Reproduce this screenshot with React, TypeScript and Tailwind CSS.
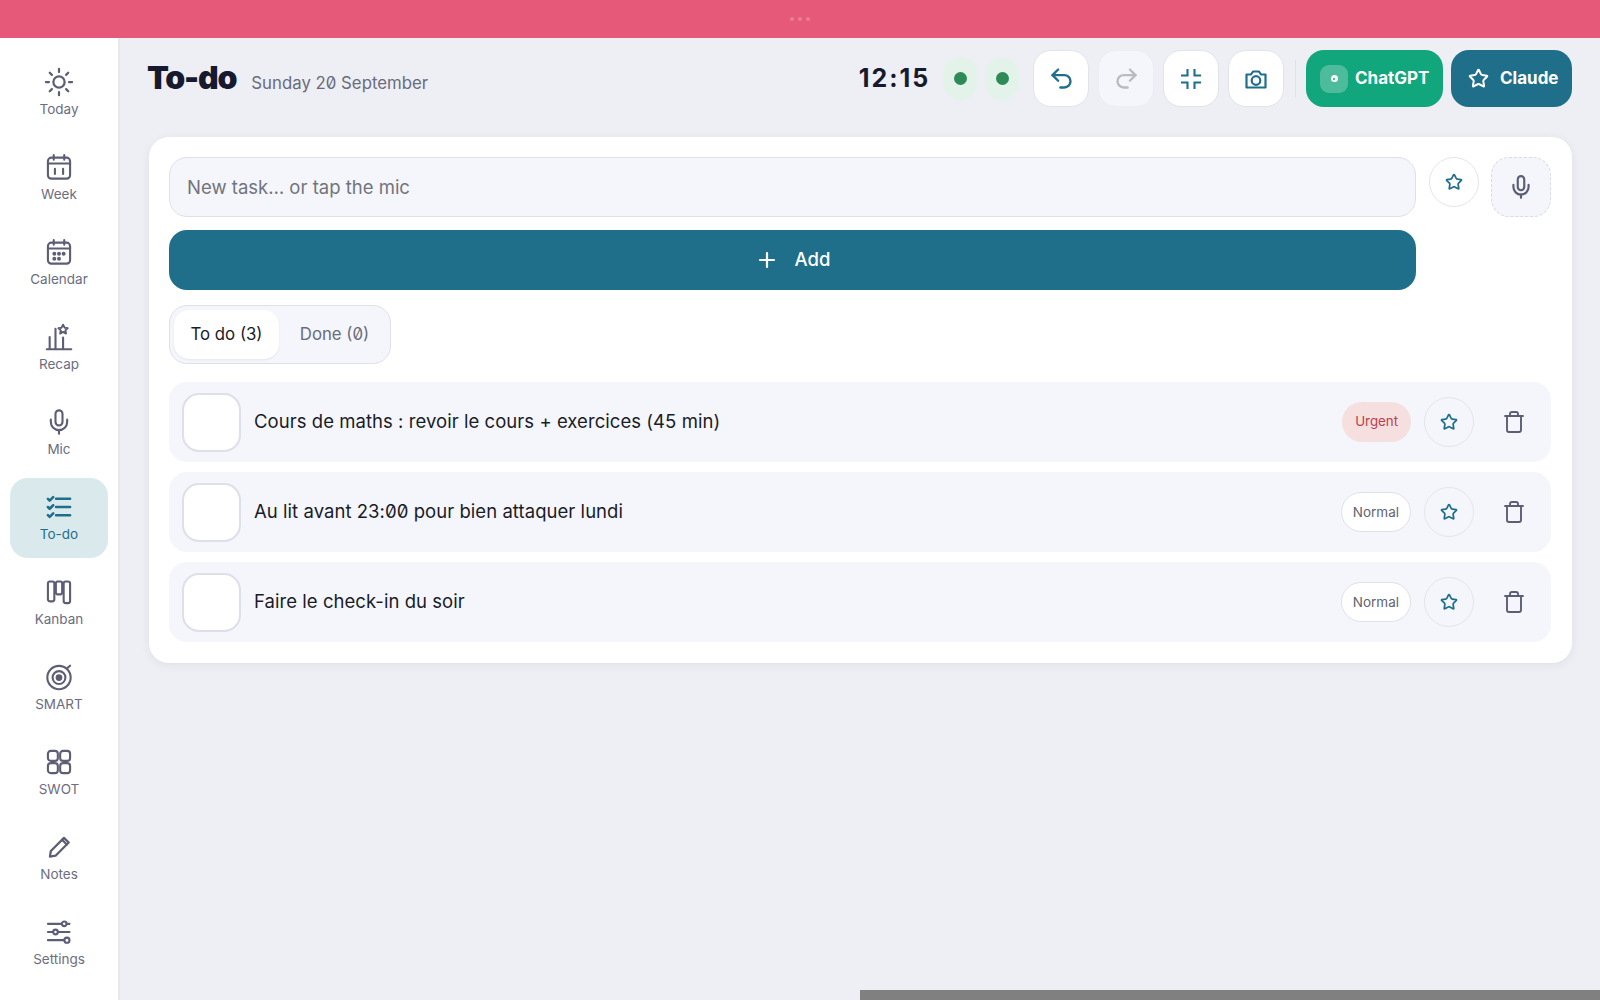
import React from "react";
import { Mic, Star, Trash, Undo2, Redo2, Plus } from "lucide-react";

const sw = 1.8;

function Svg({ children, size = 28, className = "" }: { children: React.ReactNode; size?: number; className?: string }) {
  return (
    <svg width={size} height={size} viewBox="0 0 24 24" fill="none" stroke="currentColor" strokeWidth={sw} strokeLinecap="round" strokeLinejoin="round" className={className}>
      {children}
    </svg>
  );
}

const SunIcon = () => (
  <Svg size={30}>
    <circle cx="12" cy="12" r="4.500" />
    <path d="M12 1.500v2.500M12 20v2.500M1.500 12H4M20 12h2.500M4.600 4.600l1.700 1.700M17.700 17.700l1.700 1.700M4.600 19.400l1.700-1.700M17.700 6.300l1.700-1.700" />
  </Svg>
);
const WeekIcon = () => (
  <Svg>
    <rect x="2.500" y="4" width="19" height="18" rx="3" />
    <path d="M7.500 1.800v4M16.500 1.800v4M2.500 9h19M8.500 13.500v4.500M15.500 13.500v4.500" />
  </Svg>
);
const CalendarIcon = () => (
  <Svg>
    <rect x="2.500" y="4" width="19" height="18" rx="3" />
    <path d="M7.500 1.800v4M16.500 1.800v4M2.500 9h19" />
    <g fill="currentColor" stroke="none">
      <circle cx="8" cy="13.500" r="1.700" />
      <circle cx="12" cy="13.500" r="1.700" />
      <circle cx="16" cy="13.500" r="1.700" />
      <circle cx="8" cy="17.800" r="1.700" />
      <circle cx="12" cy="17.800" r="1.700" />
    </g>
  </Svg>
);
const RecapIcon = () => (
  <Svg>
    <path d="M1.500 22.500h21M4 22.500V12M9 22.500V5M15.500 22.500V12.500" />
    <path d="m15.500 1.500 1.300 2.500 2.700.4-2 1.900.5 2.700-2.500-1.300-2.500 1.300.5-2.700-2-1.900 2.700-.4z" fill="none" strokeWidth={1.700} />
  </Svg>
);
const TodoIcon = () => (
  <Svg>
    <g strokeWidth={2.200}>
      <path d="M9.500 5h12M9.500 12h12M9.500 19h12" />
      <path d="m2.500 5 1.500 1.500L7 3.500M2.500 12 4 13.500 7 10.500M2.500 19 4 20.500 7 17.500" />
    </g>
  </Svg>
);
const KanbanIcon = () => (
  <Svg>
    <rect x="2.500" y="3" width="5.500" height="17" rx="1.800" />
    <rect x="9.300" y="3" width="5.400" height="11" rx="1.500" />
    <rect x="16" y="3" width="5.500" height="18.500" rx="1.800" />
  </Svg>
);
const SmartIcon = () => (
  <Svg>
    <circle cx="12" cy="12.500" r="10" />
    <circle cx="12" cy="12.500" r="5.500" />
    <circle cx="12" cy="12.500" r="2" fill="currentColor" />
    <path d="m19 4.500 2.500-2.200" />
  </Svg>
);
const SwotIcon = () => (
  <Svg>
    <rect x="2.500" y="2.500" width="8.500" height="8.500" rx="2.500" />
    <rect x="13" y="2.500" width="8.500" height="8.500" rx="2.500" />
    <rect x="2.500" y="13" width="8.500" height="8.500" rx="2.500" />
    <rect x="13" y="13" width="8.500" height="8.500" rx="2.500" />
  </Svg>
);
const NotesIcon = () => (
  <Svg size={27}>
    <g strokeWidth={2}>
      <path d="M3.500 21l.8-5L16 4.300 20.200 8.500 8.500 20.200z" />
      <path d="M14.300 6l4.200 4.200" />
    </g>
  </Svg>
);
const SettingsIcon = () => (
  <Svg>
    <path d="M2.500 5H14.500M18.500 5h2.500M2.500 12H7M11 12h10M2.500 19H16.500" />
    <circle cx="16.500" cy="5" r="2" />
    <circle cx="9" cy="12" r="2" />
    <circle cx="18.800" cy="19" r="2.200" />
  </Svg>
);
const CompressIcon = () => (
  <Svg size={24}>
    <path d="M8.500 2v6.500H2M15.500 2v6.500H22M8.500 22v-6.500H2M15.500 22v-6.500H22" strokeWidth={2.100} strokeLinecap="butt" strokeLinejoin="miter" />
  </Svg>
);
const CameraIcon = () => (
  <Svg size={24}>
    <g strokeWidth={2.200}>
      <path d="M2.500 7.500H7l2-3h6l2 3h4.500v13h-19z" />
      <circle cx="12" cy="13.500" r="4.300" />
    </g>
  </Svg>
);

const nav: { label: string; icon: React.ReactNode; active?: boolean }[] = [
  { label: "Today", icon: <SunIcon /> },
  { label: "Week", icon: <WeekIcon /> },
  { label: "Calendar", icon: <CalendarIcon /> },
  { label: "Recap", icon: <RecapIcon /> },
  { label: "Mic", icon: <Mic size={28} strokeWidth={sw} /> },
  { label: "To-do", icon: <TodoIcon />, active: true },
  { label: "Kanban", icon: <KanbanIcon /> },
  { label: "SMART", icon: <SmartIcon /> },
  { label: "SWOT", icon: <SwotIcon /> },
  { label: "Notes", icon: <NotesIcon /> },
  { label: "Settings", icon: <SettingsIcon /> },
];

const tasks = [
  { text: "Cours de maths : revoir le cours + exercices (45 min)", urgent: true },
  { text: "Au lit avant 23:00 pour bien attaquer lundi", urgent: false },
  { text: "Faire le check-in du soir", urgent: false },
];

function ToolBtn({ children, disabled }: { children: React.ReactNode; disabled?: boolean }) {
  return (
    <button className={`w-[56px] h-[57px] rounded-[18px] flex items-center justify-center border ${disabled ? "bg-[#f4f6fb] border-[#eceef4] text-[#b9bbc2]" : "bg-white border-[#e2e4ec] text-[#1f6f8b]"}`}>
      {children}
    </button>
  );
}

function StarBtn() {
  return (
    <button className="w-[50px] h-[50px] shrink-0 rounded-full border border-[#e3e5ea] flex items-center justify-center text-[#1f6f8b]">
      <Star size={18} strokeWidth={2.300} />
    </button>
  );
}

export default function App() {
  return (
    <div className="h-screen w-full flex flex-col overflow-hidden relative bg-[#eeeff4] font-[Inter,sans-serif] slashed-zero text-[#1a1c28]">
      <div className="h-[38px] shrink-0 bg-[#e65979] flex items-center justify-center gap-[4px]">
        <span className="w-[4px] h-[4px] rounded-full bg-[#ec7d97]" />
        <span className="w-[4px] h-[4px] rounded-full bg-[#ec7d97]" />
        <span className="w-[4px] h-[4px] rounded-full bg-[#ec7d97]" />
      </div>
      <div className="flex-1 flex min-h-0">
        <aside className="w-[120px] shrink-0 bg-white border-r-2 border-[#e6e8ee] pt-[15px] px-[10px] flex flex-col gap-[5px]">
          {nav.map((n) => (
            <div key={n.label} className={`h-[80px] shrink-0 rounded-[18px] flex flex-col items-center justify-center gap-[3px] ${n.active ? "bg-[#d9e9ec] text-[#1f6f8b]" : "text-[#5c5e76]"}`}>
              <div className="h-[28px] flex items-center justify-center">{n.icon}</div>
              <span className={`text-[13.500px] leading-[20px] ${n.active ? "text-[#1f6f8b]" : "text-[#6b6d80]"}`}>{n.label}</span>
            </div>
          ))}
        </aside>
        <main className="flex-1 min-w-0 pl-[29px] pr-[28px]">
          <header className="h-[99px] flex items-start pt-[12px]">
            <div className="flex items-baseline gap-[15px] h-[57px] pt-[6px] -ml-[2px]">
              <h1 className="text-[32px] leading-[44px] font-black tracking-[-1.200px] text-[#171a2e]">To-do</h1>
              <span className="text-[16.800px] text-[#6a6c7c]">Sunday 20 September</span>
            </div>
            <div className="ml-auto flex items-center h-[57px]">
              <span className="text-[25px] font-bold tracking-[2px] text-[#171a2e] mr-[12px] w-[73px] text-center">12:15</span>
              <div className="w-[35px] h-[43px] rounded-full bg-[#e3f3ea] flex items-center justify-center mr-[7px]">
                <span className="w-[13px] h-[13px] rounded-full bg-[#2e8b57]" />
              </div>
              <div className="w-[34px] h-[43px] rounded-full bg-[#e3f3ea] flex items-center justify-center mr-[14px]">
                <span className="w-[13px] h-[13px] rounded-full bg-[#2e8b57]" />
              </div>
              <div className="flex gap-[9px]">
                <ToolBtn><Undo2 size={27} strokeWidth={2.100} /></ToolBtn>
                <ToolBtn disabled><Redo2 size={27} strokeWidth={2.100} /></ToolBtn>
                <ToolBtn><CompressIcon /></ToolBtn>
                <ToolBtn><CameraIcon /></ToolBtn>
              </div>
              <div className="w-px h-[37px] bg-[#dfe1e8] ml-[11px] mr-[10px]" />
              <button className="w-[137px] h-[57px] rounded-[18px] bg-[#12a67c] text-white font-bold text-[17px] flex items-center pl-[14px] gap-[7px]">
                <span className="w-[28px] h-[28px] rounded-[9px] bg-white/25 flex items-center justify-center">
                  <span className="w-[7px] h-[7px] rounded-full bg-white flex items-center justify-center">
                    <span className="w-[2px] h-[2px] rounded-full bg-[#12a67c]" />
                  </span>
                </span>
                ChatGPT
              </button>
              <button className="w-[121px] h-[57px] ml-[8px] rounded-[18px] bg-[#1f6f8b] text-white font-bold text-[17px] flex items-center pl-[17px] gap-[11px]">
                <Star size={21} strokeWidth={2.300} />
                Claude
              </button>
            </div>
          </header>

          <section className="bg-white rounded-[20px] pt-[20px] pl-[20px] pr-[21px] pb-[21px] shadow-[0_2px_10px_rgba(30,40,70,0.07)]">
            <div className="flex gap-[12px]">
              <div className="flex-1 min-w-0 flex flex-col gap-[13px]">
                <input
                  placeholder="New task… or tap the mic"
                  className="w-full h-[60px] rounded-[18px] bg-[#f4f6fb] border border-[#dfe1e8] pl-[17px] pr-[18px] text-[18.500px] outline-none placeholder:text-[#72747c]"
                />
                <button className="w-full h-[60px] rounded-[18px] bg-[#1f6f8b] text-white text-[18.500px] font-medium flex items-center justify-center gap-[16px]">
                  <Plus size={24} strokeWidth={2.200} />
                  Add
                </button>
              </div>
              <div className="pl-[1px]">
                <button className="w-[50px] h-[50px] rounded-full border border-[#e3e5ea] flex items-center justify-center text-[#1f6f8b]">
                  <Star size={18} strokeWidth={2.300} />
                </button>
              </div>
              <button className="w-[60px] h-[60px] rounded-[18px] border border-dashed border-[#d8dae4] bg-[#f4f6fb] flex items-center justify-center text-[#5c5e76]">
                <Mic size={26} strokeWidth={2} />
              </button>
            </div>

            <div className="mt-[15px] inline-flex h-[59px] rounded-[18px] border border-[#dfe1e8] bg-[#f4f6fb] p-[4px]">
              <div className="w-[105px] bg-white rounded-[15px] flex items-center justify-center text-[16.800px] shadow-[0_1px_2px_rgba(30,40,70,0.08)] text-[#1a1c28]">To do (3)</div>
              <div className="w-[107px] flex items-center justify-center pl-[4px] text-[16.800px] text-[#6a6c7c]">Done (0)</div>
            </div>

            <div className="mt-[18px] flex flex-col gap-[10px]">
              {tasks.map((t) => (
                <div key={t.text} className="h-[80px] rounded-[18px] bg-[#f4f6fb] flex items-center pl-[13px] pr-[12px]">
                  <div className="w-[59px] h-[59px] shrink-0 rounded-[17px] bg-white border-2 border-[#dddfea]" />
                  <span className="ml-[13px] text-[18.500px] flex-1 min-w-0 tracking-[0.05px]">{t.text}</span>
                  {t.urgent ? (
                    <span className="h-[40px] px-[13px] rounded-full bg-[#f6dfdf] text-[#b8404f] text-[13.300px] flex items-center">Urgent</span>
                  ) : (
                    <span className="h-[40px] px-[11px] rounded-full bg-white border border-[#dfe1e8] text-[#62646f] text-[13.500px] flex items-center">Normal</span>
                  )}
                  <div className="ml-[13px]"><StarBtn /></div>
                  <button className="ml-[15px] w-[50px] h-[50px] flex items-center justify-center text-[#5c5e76]">
                    <Trash size={24} strokeWidth={1.900} />
                  </button>
                </div>
              ))}
            </div>
          </section>
        </main>
      </div>
      <div className="absolute bottom-0 right-0 left-[860px] h-[10px] bg-[#808080]" />
    </div>
  );
}
